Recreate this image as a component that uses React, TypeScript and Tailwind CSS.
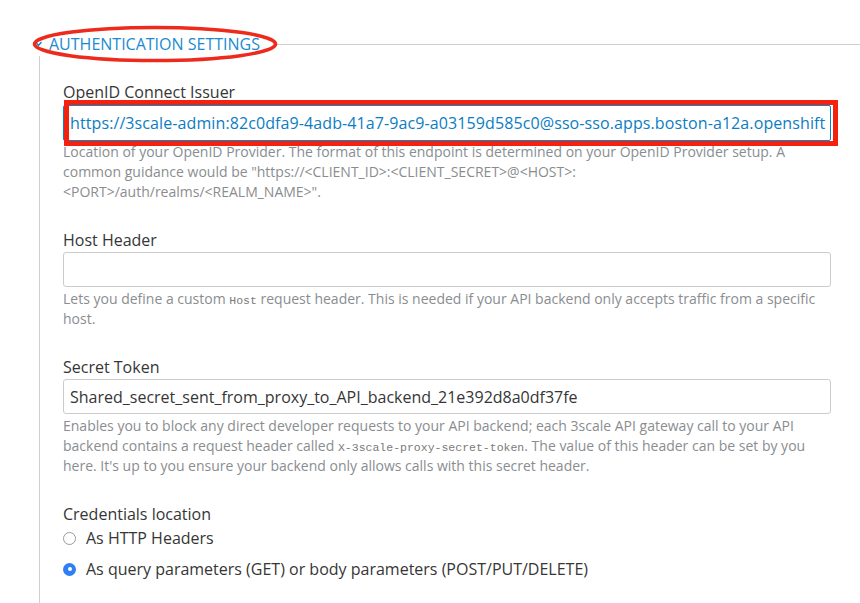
import React from "react";

function Help({ children, className = "" }: { children: React.ReactNode; className?: string }) {
  return (
    <div className={"text-[14px] leading-[20px] text-[#8a8d90] " + className}>{children}</div>
  );
}

function Code({ children }: { children: React.ReactNode }) {
  return (
    <code className="font-['Liberation_Mono',monospace] text-[11.5px] leading-none text-[#7a7a7a]">{children}</code>
  );
}

function Label({ children, className = "" }: { children: React.ReactNode; className?: string }) {
  return <div className={"text-[16px] leading-[20px] text-[#363636] " + className}>{children}</div>;
}

export default function App() {
  return (
    <div className="relative w-[860px] h-[603px] overflow-hidden bg-white font-['Open_Sans',sans-serif]">
      <div className="pt-[32px]">
        {/* legend row */}
        <div className="relative flex h-[24px] items-center pl-[35px]">
          <svg width="7" height="6" viewBox="0 0 7 6" className="shrink-0">
            <path d="M0.5 1 L3.5 4.5 L6.5 1" fill="none" stroke="#0088ce" strokeWidth="1.4" />
          </svg>
          <span className="ml-[7px] text-[16px] leading-[20px] text-[#1a8bd0]">AUTHENTICATION SETTINGS</span>
          <div className="ml-[15px] h-px flex-1 bg-[#cfcfcf]" />
          <svg
            className="pointer-events-none absolute left-[31px] top-[-7px]"
            width="250"
            height="40"
            viewBox="0 0 250 40"
          >
            <ellipse cx="124" cy="19" rx="120.5" ry="16.5" fill="none" stroke="#ee2a1c" strokeWidth="3.6" />
          </svg>
        </div>

        {/* body */}
        <div className="ml-[39px] border-l border-[#cfcfcf] pl-[23px] pr-[29px] pt-[26px] pb-[40px]">
          {/* OpenID */}
          <Label>OpenID Connect Issuer</Label>
          <div className="relative mt-[3px]">
            <div className="flex h-[36px] items-center overflow-hidden whitespace-nowrap rounded-[2px] border border-[#0088ce] pl-[6px] text-[16px] tracking-[0.1px] text-[#0b7dc2]">
              https://3scale-admin:82c0dfa9-4adb-41a7-9ac9-a03159d585c0@sso-sso.apps.boston-a12a.openshift
            </div>
            <div className="pointer-events-none absolute left-[1px] right-[-7px] top-[-5px] bottom-[-5px] border-[5px] border-[#f4210f]" />
          </div>
          <Help className="mt-[1px]">
            Location of your OpenID Provider. The format of this endpoint is determined on your OpenID Provider setup. A
            common guidance would be "https://&lt;CLIENT_ID&gt;:&lt;CLIENT_SECRET&gt;@&lt;HOST&gt;:
            <br />
            &lt;PORT&gt;/auth/realms/&lt;REALM_NAME&gt;".
          </Help>

          {/* Host Header */}
          <Label className="mt-[28px]">Host Header</Label>
          <div className="mt-[2px] h-[35px] rounded-[3px] border border-[#cccccc]" />
          <Help className="mt-[2px]">
            Lets you define a custom <Code>Host</Code> request header. This is needed if your API backend only accepts
            traffic from a specific host.
          </Help>

          {/* Secret Token */}
          <Label className="mt-[28px]">Secret Token</Label>
          <div className="mt-[2px] flex h-[35px] items-center rounded-[3px] border border-[#cccccc] pl-[6px] text-[16px] text-[#363636]">
            Shared_secret_sent_from_proxy_to_API_backend_21e392d8a0df37fe
          </div>
          <Help className="mt-[2px] leading-[20.5px]">
            Enables you to block any direct developer requests to your API backend; each 3scale API gateway call to your API
            backend contains a request header called <Code>X-3scale-proxy-secret-token</Code>. The value of this header can
            be set by you here. It's up to you ensure your backend only allows calls with this secret header.
          </Help>

          {/* Credentials */}
          <Label className="mt-[28px]">Credentials location</Label>
          <div className="mt-[4px] flex h-[20px] items-center">
            <span className="h-[13px] w-[13px] shrink-0 rounded-full border border-[#9a9a9a] bg-white" />
            <span className="ml-[10px] text-[16px] leading-[20px] text-[#363636]">As HTTP Headers</span>
          </div>
          <div className="mt-[11px] flex h-[20px] items-center">
            <span className="flex h-[13px] w-[13px] shrink-0 items-center justify-center rounded-full bg-[#2f7ef3]">
              <span className="h-[4px] w-[4px] rounded-full bg-white" />
            </span>
            <span className="ml-[10px] text-[16px] leading-[20px] text-[#363636]">
              As query parameters (GET) or body parameters (POST/PUT/DELETE)
            </span>
          </div>
        </div>
      </div>
    </div>
  );
}
